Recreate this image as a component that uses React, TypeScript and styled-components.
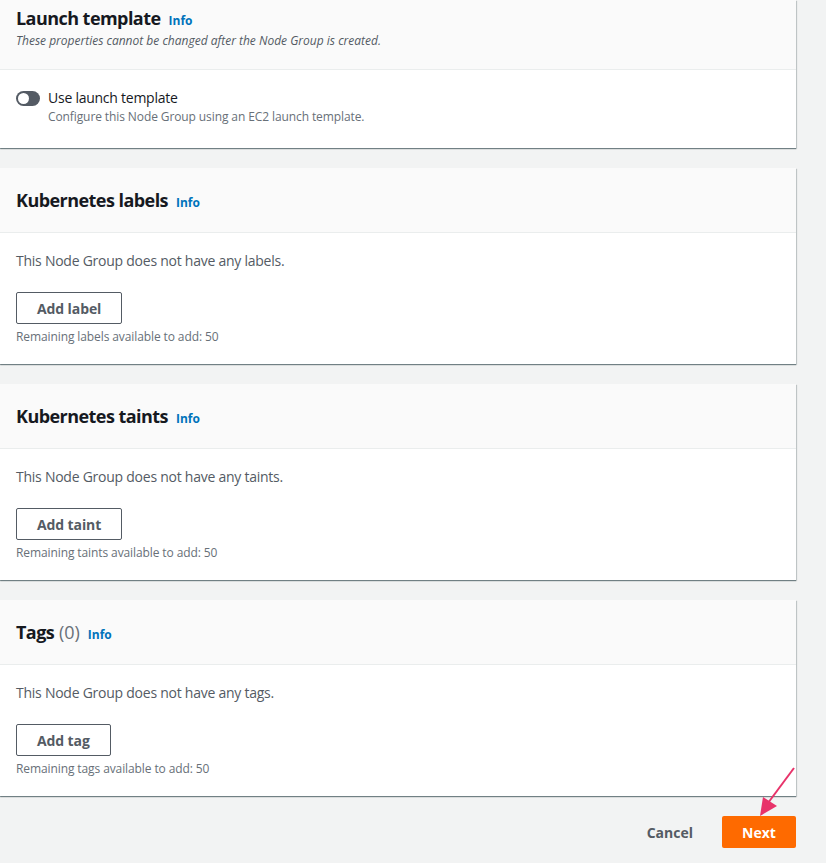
import React from "react";
import styled, { createGlobalStyle } from "styled-components";

const Global = createGlobalStyle`
  html, body { margin: 0; padding: 0; background: #f2f3f3; }
  body { font-family: "Open Sans", "Noto Sans", "Liberation Sans", sans-serif; color: #16191f; }
  * { box-sizing: border-box; }
`;

const Page = styled.main`
  position: relative;
  width: 826px;
  height: 863px;
  overflow: hidden;
  padding-right: 30px;
  display: flex;
  flex-direction: column;
  gap: 20px;
`;

const Card = styled.section`
  background: #fff;
  box-shadow: 0 1px 1px 0 rgba(0, 28, 36, 0.45), 1px 1px 1px 0 rgba(0, 28, 36, 0.15);
  display: flex;
  flex-direction: column;
`;

const Header = styled.header<{ $compact?: boolean }>`
  background: #fafafa;
  border-bottom: 1px solid #eaeded;
  padding: ${(p) => (p.$compact ? "7px 16px 20px" : "21px 16px 21px")};
`;

const TitleRow = styled.div`
  display: flex;
  align-items: baseline;
  gap: 8px;
`;

const Title = styled.h2`
  margin: 0;
  font-size: 18px;
  line-height: 22px;
  font-weight: 700;
  letter-spacing: -0.55px;
  color: #16191f;
`;

const Count = styled.span`
  font-weight: 400;
  letter-spacing: 0;
  color: #687078;
`;

const Info = styled.a`
  font-size: 12px;
  font-weight: 700;
  color: #0073bb;
  text-decoration: none;
`;

const Subtitle = styled.p`
  margin: 4px 0 0;
  font-size: 12px;
  line-height: 16px;
  font-style: italic;
  color: #545b64;
`;

const Body = styled.div<{ $pt?: number; $pb?: number }>`
  padding: ${(p) => p.$pt ?? 18}px 16px ${(p) => p.$pb ?? 19}px;
  display: flex;
  flex-direction: column;
  align-items: flex-start;
`;

const ToggleRow = styled.label`
  display: flex;
  gap: 8px;
  align-items: flex-start;
`;

const Track = styled.span`
  margin-top: 3px;
  width: 24px;
  height: 15px;
  border-radius: 8px;
  background: #545b64;
  display: flex;
  align-items: center;
  padding-left: 2px;
  flex-shrink: 0;
`;

const Knob = styled.span`
  width: 11px;
  height: 11px;
  border-radius: 50%;
  background: #fff;
`;

const ToggleText = styled.div`
  display: flex;
  flex-direction: column;
`;

const ToggleLabel = styled.span`
  font-size: 14px;
  line-height: 20px;
  letter-spacing: -0.25px;
  color: #16191f;
`;

const Hint = styled.span<{ $mt?: number }>`
  font-size: 12px;
  line-height: 16px;
  letter-spacing: -0.1px;
  color: #687078;
  margin-top: ${(p) => p.$mt ?? 0}px;
`;

const Empty = styled.p`
  margin: 0;
  font-size: 14px;
  line-height: 20px;
  letter-spacing: -0.25px;
  color: #545b64;
`;

const OutlineButton = styled.button`
  margin-top: 21px;
  height: 32px;
  padding: 0 20px;
  border: 1px solid #545b64;
  border-radius: 2px;
  background: #fff;
  font-family: inherit;
  font-size: 14px;
  font-weight: 700;
  letter-spacing: -0.1px;
  color: #545b64;
  cursor: pointer;
`;

const Footer = styled.footer`
  display: flex;
  justify-content: flex-end;
  align-items: center;
  gap: 29px;
`;

const LinkButton = styled.button`
  border: none;
  background: none;
  padding: 0;
  font-family: inherit;
  font-size: 14px;
  font-weight: 700;
  color: #545b64;
  cursor: pointer;
`;

const PrimaryButton = styled.button`
  width: 74px;
  height: 32px;
  border: none;
  border-radius: 2px;
  background: #fe6a00;
  color: #fff;
  font-family: inherit;
  font-size: 14px;
  font-weight: 700;
  cursor: pointer;
`;

const Arrow = styled.svg`
  position: absolute;
  left: 0;
  top: 0;
  pointer-events: none;
`;

type ListSection = {
  title: string;
  count?: string;
  empty: string;
  button: string;
  hint: string;
};

const sections: ListSection[] = [
  {
    title: "Kubernetes labels",
    empty: "This Node Group does not have any labels.",
    button: "Add label",
    hint: "Remaining labels available to add: 50",
  },
  {
    title: "Kubernetes taints",
    empty: "This Node Group does not have any taints.",
    button: "Add taint",
    hint: "Remaining taints available to add: 50",
  },
  {
    title: "Tags",
    count: "(0)",
    empty: "This Node Group does not have any tags.",
    button: "Add tag",
    hint: "Remaining tags available to add: 50",
  },
];

export default function App() {
  return (
    <>
      <Global />
      <Page>
        <Card>
          <Header $compact>
            <TitleRow>
              <Title>Launch template</Title>
              <Info href="#">Info</Info>
            </TitleRow>
            <Subtitle>These properties cannot be changed after the Node Group is created.</Subtitle>
          </Header>
          <Body $pt={18} $pb={23}>
            <ToggleRow>
              <Track>
                <Knob />
              </Track>
              <ToggleText>
                <ToggleLabel>Use launch template</ToggleLabel>
                <Hint $mt={1}>Configure this Node Group using an EC2 launch template.</Hint>
              </ToggleText>
            </ToggleRow>
          </Body>
        </Card>

        {sections.map((s) => (
          <Card key={s.title}>
            <Header>
              <TitleRow>
                <Title>
                  {s.title}
                  {s.count && <Count> {s.count}</Count>}
                </Title>
                <Info href="#">Info</Info>
              </TitleRow>
            </Header>
            <Body>
              <Empty>{s.empty}</Empty>
              <OutlineButton>{s.button}</OutlineButton>
              <Hint $mt={5}>{s.hint}</Hint>
            </Body>
          </Card>
        ))}

        <Footer>
          <LinkButton>Cancel</LinkButton>
          <PrimaryButton>Next</PrimaryButton>
        </Footer>

        <Arrow width="826" height="863" viewBox="0 0 826 863">
          <line x1="794" y1="768" x2="768" y2="803" stroke="#e8336a" strokeWidth="2" />
          <polygon points="760,816 763,797 777,806" fill="#e8336a" />
        </Arrow>
      </Page>
    </>
  );
}
